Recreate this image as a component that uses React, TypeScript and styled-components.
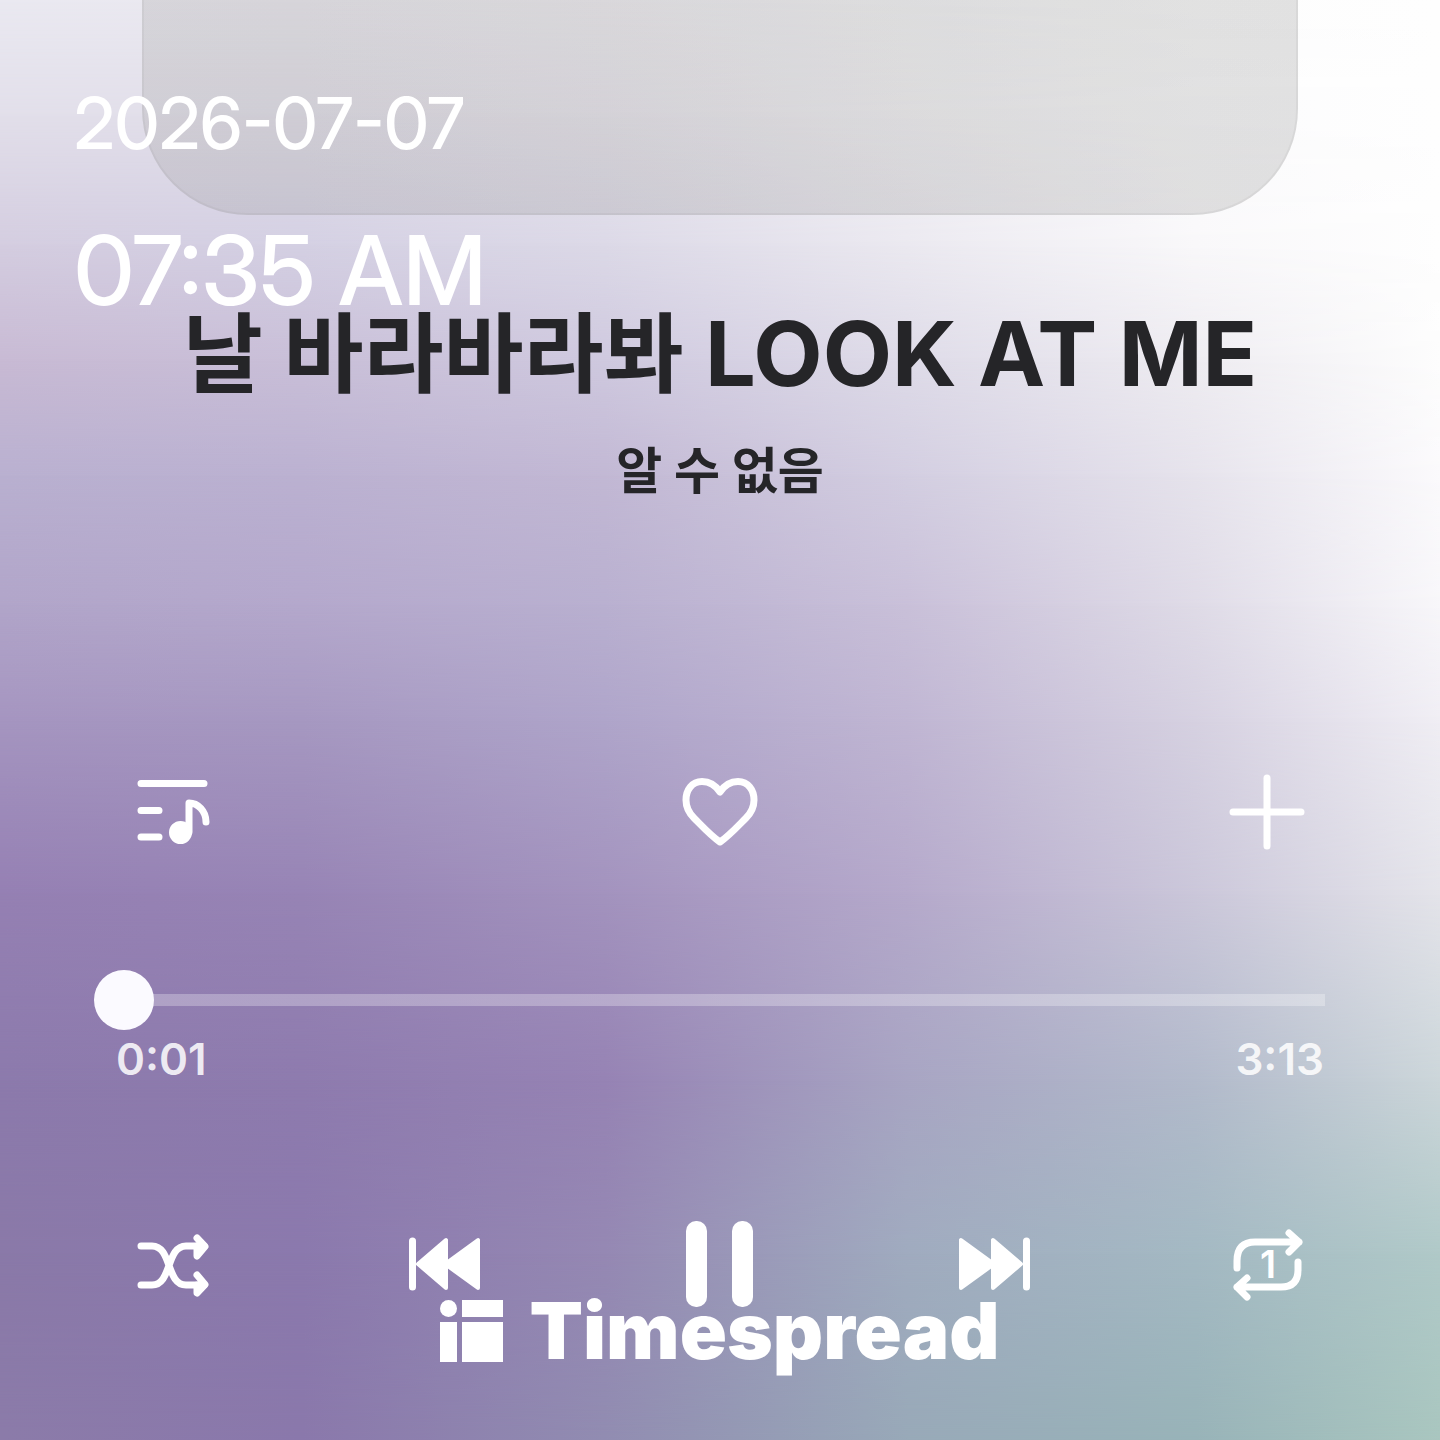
import React from "react";
import styled, { createGlobalStyle } from "styled-components";

const GlobalStyle = createGlobalStyle`
  *, *::before, *::after { box-sizing: border-box; }
  body { margin: 0; background: #a9a0c4; }
  h1, p { margin: 0; }
`;

const fontStack = `Inter, "Noto Sans CJK KR", sans-serif`;

/* Colour bands of the blurred album backdrop, from top to bottom. */
const bands: { at: number; colors: string[] }[] = [
  { at: 0, colors: ["#eae9f1", "#ebe9f0", "#f0eef3", "#f6f6f8", "#fdfdfd", "#fefefe"] },
  { at: 8, colors: ["#e2dfea", "#e2dfea", "#e9e6ee", "#f4f3f6", "#fcfcfd", "#fefefe"] },
  { at: 17, colors: ["#d4cde0", "#d4d0e3", "#dcd9e7", "#ebe9f0", "#f9f8fa", "#fefefe"] },
  { at: 25, colors: ["#c8bad4", "#c9bfd8", "#cfc9df", "#dedbe8", "#eeecf1", "#fdfdfd"] },
  { at: 33, colors: ["#b9b0d0", "#bbb1d1", "#c2b8d4", "#d3cee1", "#e6e3ec", "#fbfafc"] },
  { at: 42, colors: ["#b1a5c9", "#b4a8cc", "#b9b0d0", "#c9c0d9", "#dfdbe7", "#f8f7fa"] },
  { at: 50, colors: ["#a595c0", "#a698c1", "#afa5ca", "#c0b6d3", "#d6d1e1", "#f0eef4"] },
  { at: 62, colors: ["#9580b3", "#9784b5", "#a393be", "#b5a9cb", "#cbc7da", "#e4e4ea"] },
  { at: 75, colors: ["#8c7aac", "#8e7bae", "#9683b4", "#a8a5c3", "#b2bacb", "#ccd6da"] },
  { at: 87, colors: ["#8a79a8", "#8b79ad", "#9588b3", "#a0abbf", "#a4b9c3", "#b0c9c8"] },
  { at: 100, colors: ["#8b7ba9", "#8a78ab", "#918cb1", "#98a9b8", "#98b3b8", "#a9c6bf"] },
];

const Screen = styled.div`
  display: grid;
  min-height: 100vh;
  overflow: hidden;
  font-family: ${fontStack};
  color: #fff;
`;

const Backdrop = styled.div`
  grid-area: 1 / 1;
  display: grid;
`;

const Band = styled.div<{ $colors: string[]; $from: number; $to: number }>`
  grid-area: 1 / 1;
  background: linear-gradient(
    to right,
    ${(p) => p.$colors.map((c, i) => `${c} ${[0, 21, 42, 63, 83, 100][i]}%`).join(", ")}
  );
  mask-image: ${(p) =>
    p.$to === 0 ? "none" : `linear-gradient(to bottom, transparent ${p.$from}%, #000 ${p.$to}%)`};
`;

const Player = styled.main`
  grid-area: 1 / 1;
  z-index: 1;
  display: flex;
  flex-direction: column;
`;

const Artwork = styled.div`
  height: 215px;
  margin: 0 142px;
  border: 2px solid rgba(90, 90, 90, 0.06);
  border-top: 0;
  border-radius: 0 0 106px 106px;
  background: linear-gradient(to right, rgba(138, 138, 132, 0.2), rgba(115, 115, 115, 0.2)) border-box;
`;

const TrackInfo = styled.section`
  display: flex;
  flex-direction: column;
  align-items: center;
  gap: 24px;
  padding-top: 83px;
  color: #252528;
  text-align: center;
`;

const TrackTitle = styled.h1`
  font-size: 90px;
  line-height: 112px;
  font-weight: 700;
  white-space: nowrap;
`;

const Hangul = styled.span`
  font-size: 87px;
`;

const Artist = styled.p`
  font-size: 50px;
  line-height: 72px;
  font-weight: 700;
`;

const ButtonRow = styled.div`
  display: flex;
  justify-content: space-between;
  padding: 0 136px;
`;

const Actions = styled(ButtonRow)`
  margin-top: 261px;
`;

const Transport = styled(ButtonRow)`
  margin-top: 132px;
`;

const IconButton = styled.button`
  width: 76px;
  height: 88px;
  padding: 0;
  border: 0;
  background: none;
  color: inherit;
  cursor: pointer;

  svg {
    display: block;
    overflow: visible;
    fill: none;
    stroke: currentColor;
    stroke-width: 7px;
    stroke-linecap: round;
    stroke-linejoin: round;
  }

  .solid {
    fill: currentColor;
    stroke-width: 4px;
  }
`;

const RepeatCount = styled.text`
  fill: currentColor;
  stroke: none;
  font: 600 38px ${fontStack};
  text-anchor: middle;
`;

const Progress = styled.section`
  padding-top: 114px;
`;

const Seek = styled.input`
  display: block;
  width: calc(100% - 203px);
  height: 60px;
  margin: 0 115px 0 88px;
  appearance: none;
  background: none;
  cursor: pointer;

  &::-webkit-slider-runnable-track {
    height: 60px;
    background: linear-gradient(rgba(255, 255, 255, 0.28), rgba(255, 255, 255, 0.28)) right center /
      calc(100% - 40px) 12px no-repeat;
  }

  &::-webkit-slider-thumb {
    appearance: none;
    width: 60px;
    height: 60px;
    border-radius: 50%;
    background: #fbfaff;
  }
`;

const Times = styled.div`
  display: flex;
  justify-content: space-between;
  padding: 0 116px;
  font-size: 44px;
  line-height: 58px;
  font-weight: 600;
  color: rgba(255, 255, 255, 0.86);
`;

const Overlay = styled.div`
  grid-area: 1 / 1;
  z-index: 2;
  display: flex;
  flex-direction: column;
  justify-content: space-between;
  padding: 72px 74px 73px;
  pointer-events: none;
`;

const Clock = styled.div`
  display: flex;
  flex-direction: column;
  gap: 36px;
  font-family: "Inter Display", ${fontStack};
  font-weight: 550;
`;

const DateText = styled.time`
  font-size: 71px;
  line-height: 102px;
`;

const TimeText = styled.time`
  font-size: 96px;
  line-height: 120px;
`;

const Brand = styled.div`
  display: flex;
  align-items: center;
  justify-content: center;
  gap: 26px;
  font-size: 78px;
  line-height: 72px;
  font-weight: 900;
`;

const BrandMark = styled.svg`
  width: 63px;
  height: 62px;
  fill: currentColor;
`;

type IconProps = { label: string; children: React.ReactNode };

function Icon({ label, children }: IconProps) {
  return (
    <IconButton type="button" aria-label={label}>
      <svg width="76" height="88" viewBox="0 0 76 88" aria-hidden="true">
        {children}
      </svg>
    </IconButton>
  );
}

export default function App() {
  return (
    <Screen>
      <GlobalStyle />
      <Backdrop aria-hidden="true">
        {bands.map((band, i) => (
          <Band key={band.at} $colors={band.colors} $from={i ? bands[i - 1].at : 0} $to={band.at} />
        ))}
      </Backdrop>

      <Player>
        <Artwork />
        <TrackInfo>
          <TrackTitle>
            <Hangul>날 바라바라봐</Hangul> LOOK AT ME
          </TrackTitle>
          <Artist>알 수 없음</Artist>
        </TrackInfo>

        <Actions>
          <Icon label="Playlist">
            <path d="M5 15.5H68M5 42.500H23M5 69H23" />
            <circle cx="44.500" cy="64.500" r="9.500" className="solid" />
            <path d="M53 64V35C62 35 70 43 70 54" />
          </Icon>
          <Icon label="Like">
            <path d="M38 24C32 15 25 13.500 20 13.500C10 13.500 4 22 4 32C4 40 7 45 12 50C20 58 29 68 38 74C47 68 56 58 64 50C69 45 72 40 72 32C72 22 66 13.500 56 13.500C51 13.500 44 15 38 24Z" />
          </Icon>
          <Icon label="Add">
            <path d="M39 10V78M5 44H73" />
          </Icon>
        </Actions>

        <Progress>
          <Seek type="range" min={0} max={193} defaultValue={1} aria-label="Seek" />
          <Times>
            <span>0:01</span>
            <span>3:13</span>
          </Times>
        </Progress>

        <Transport>
          <Icon label="Shuffle">
            <path d="M5 26H16C36 26 30 65 50 65H68M5 65H16C36 65 30 26 50 26H68" />
            <path d="M61 18L69 26.500L61 36V26M61 55L69 64.500L61 73V65" />
          </Icon>
          <Icon label="Previous">
            <path d="M3.500 21V67" />
            <path className="solid" d="M9 44L37 20V68ZM36 44L69 20V68Z" />
          </Icon>
          <Icon label="Pause">
            <rect x="4" y="1" width="21" height="86" rx="10" fill="currentColor" stroke="none" />
            <rect x="50" y="1" width="21" height="86" rx="10" fill="currentColor" stroke="none" />
          </Icon>
          <Icon label="Next">
            <path d="M71.500 21V67" />
            <path className="solid" d="M66 44L38 20V68ZM39 44L6 20V68Z" />
          </Icon>
          <Icon label="Repeat one">
            <path d="M9 48V41Q9 22 27 22H71M61 13L71 22L61 32M70 42V50Q70 67 53 67H9M19 58L9 67L19 77" />
            <RepeatCount x="40" y="58">1</RepeatCount>
          </Icon>
        </Transport>
      </Player>

      <Overlay>
        <Clock>
          <DateText dateTime="2026-07-07">2026-07-07</DateText>
          <TimeText dateTime="07:35">07:35 AM</TimeText>
        </Clock>
        <Brand>
          <BrandMark viewBox="0 0 63 62" aria-hidden="true">
            <circle cx="8.500" cy="8.500" r="8.500" />
            <path d="M22 0H63V17H22ZM0 22H17V62H0ZM22 22H63V62H22Z" />
          </BrandMark>
          <span>Timespread</span>
        </Brand>
      </Overlay>
    </Screen>
  );
}
